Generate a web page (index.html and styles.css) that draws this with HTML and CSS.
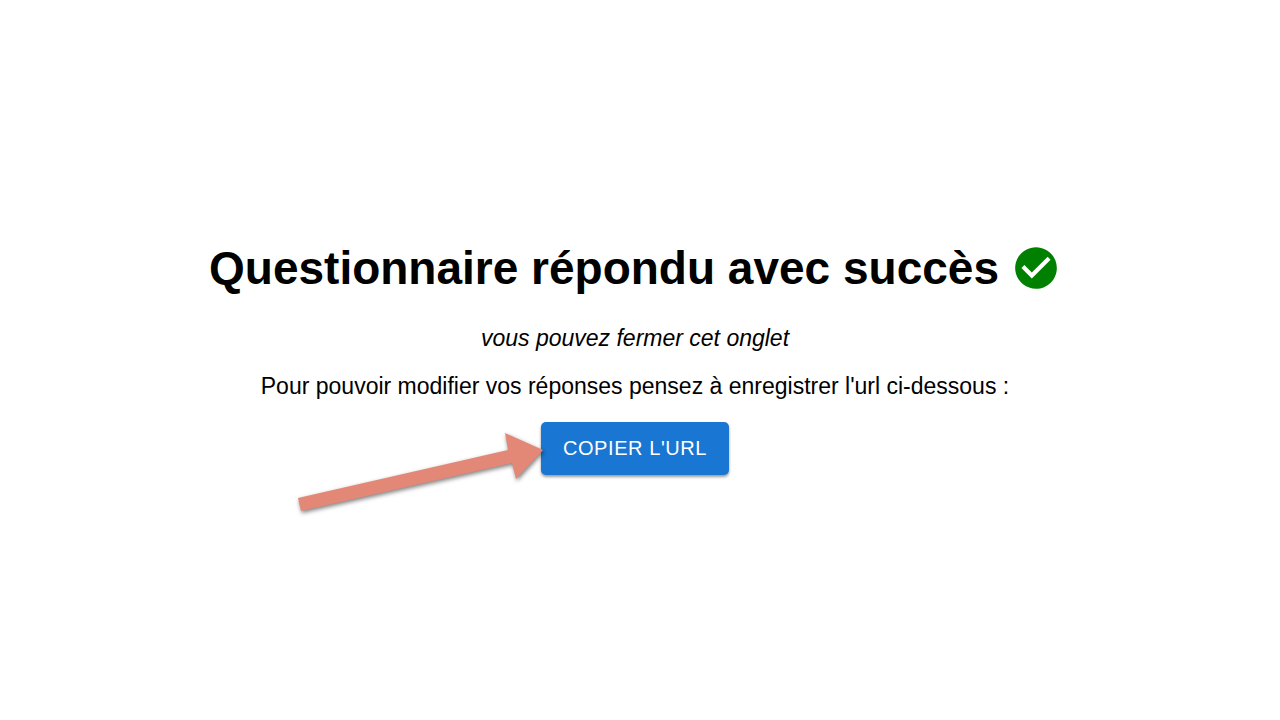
FILE: index.html
```html
<!DOCTYPE html>
<html lang="fr">
  <head>
    <meta charset="utf-8">
    <title>Questionnaire</title>
    <link rel="stylesheet" href="styles.css">
  </head>
  <body>
    <main class="success">
      <div class="success-header">
        <h1>Questionnaire répondu avec succès</h1>
        <svg class="check-icon" viewBox="0 0 24 24" aria-hidden="true">
          <path d="M12 2C6.48 2 2 6.48 2 12s4.48 10 10 10 10-4.48 10-10S17.52 2 12 2zm-2 15-5-5 1.41-1.41L10 14.17l7.59-7.59L19 8l-9 9z" />
        </svg>
      </div>
      <p class="close-hint">vous pouvez fermer cet onglet</p>
      <p>Pour pouvoir modifier vos réponses pensez à enregistrer l'url ci-dessous :</p>
      <div class="copy">
        <button type="button" class="copy-button">COPIER L'URL</button>
        <!-- arrow pointing at the button -->
        <svg class="arrow" viewBox="0 0 250 90" aria-hidden="true">
          <path d="M2 68 L212 20 L209 3 L247 20 L220 49 L216 33 L5 81 Z" />
        </svg>
      </div>
    </main>
  </body>
</html>
```

FILE: styles.css
```css
body {
  margin: 0;
  background: #fff;
  color: #000;
  font-family: "Liberation Sans", Arial, Helvetica, sans-serif;
}

.success {
  min-height: 100vh;
  box-sizing: border-box;
  padding: 0 10px 3px 0;
  display: flex;
  flex-direction: column;
  align-items: center;
  justify-content: center;
}

.success-header {
  display: flex;
  align-items: center;
  gap: 12px;
  margin-bottom: 32px;
}

.success h1 {
  margin: 0;
  font-size: 46px;
  line-height: 52px;
}

.success p {
  margin: 0 0 24px;
  font-size: 23px;
  line-height: 24px;
}

.success .close-hint {
  font-style: italic;
}

.check-icon {
  width: 50px;
  height: 50px;
  flex-shrink: 0;
  fill: #008000;
}

.copy {
  position: relative;
}

.copy-button {
  display: block;
  padding: 14px 22px;
  border: none;
  border-radius: 5px;
  background: #1976d2;
  color: #fff;
  font-family: inherit;
  font-size: 20px;
  line-height: 25px;
  letter-spacing: 0.02857em;
  cursor: pointer;
  box-shadow: 0 2px 3px rgba(0, 0, 0, 0.4);
}

.arrow {
  position: absolute;
  top: 8px;
  right: 100%;
  width: 250px;
  height: 90px;
  margin-right: -5px;
  overflow: visible;
  fill: #e38877;
  filter: drop-shadow(1px 2px 2px rgba(0, 0, 0, 0.5));
  pointer-events: none;
}
```
